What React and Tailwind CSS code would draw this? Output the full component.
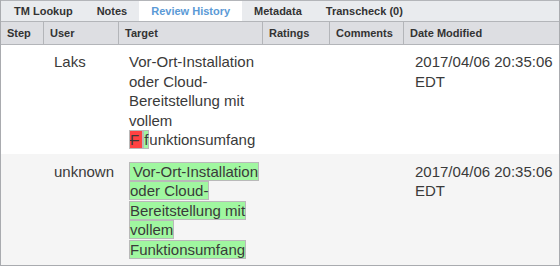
const tabs = ["TM Lookup", "Notes", "Review History", "Metadata", "Transcheck (0)"];
const cols = ["Step", "User", "Target", "Ratings", "Comments", "Date Modified"];

function Added({ children }) {
  return (
    <span className="bg-[#a0f7a0] border border-[#b9b9b9] box-decoration-clone">{children}</span>
  );
}

export default function App() {
  return (
    <div
      className="w-[560px] h-[266px] overflow-hidden bg-white border border-t-0 border-[#a9abaf] text-[#3a3a3a]"
      style={{ fontFamily: '"Liberation Sans", Arial, sans-serif' }}
    >
      {/* tabs */}
      <div className="flex h-[22px] bg-[#e9ebee] border-t border-b border-[#b3b5b9] pl-px">
        {tabs.map((t) => (
          <div
            key={t}
            className={
              t === "Review History"
                ? "px-3 text-[11px] font-bold leading-[20px] bg-white text-[#5b9ad6]"
                : "px-3 text-[11px] font-bold leading-[20px] text-[#333]"
            }
          >
            {t}
          </div>
        ))}
      </div>

      <div className="grid grid-cols-[43px_75px_144px_67px_74px_1fr]">
        {/* header */}
        {cols.map((c, i) => (
          <div
            key={c}
            className={
              "h-[23px] bg-[#dddee2] border-b border-[#b3b5b9] pl-[6px] text-[11px] font-bold leading-[22px] text-[#333] " +
              (i < 5 ? "border-r" : "")
            }
          >
            {c}
          </div>
        ))}

        {/* row 1 */}
        <div className="contents text-[15px] leading-[19.5px]">
          <div className="pt-[7px] pb-[4px]"></div>
          <div className="pt-[7px] pb-[4px] pl-[10px]">Laks</div>
          <div className="pt-[7px] pb-[4px] pl-[10px]">
            Vor-Ort-Installation oder Cloud-Bereitstellung mit vollem{" "}
            <span className="bg-[#ff4242] border border-[#b9b9b9] line-through pr-[3px]">F</span>
            <span className="bg-[#a0f7a0] border border-[#b9b9b9]">f</span>unktionsumfang
          </div>
          <div className="pt-[7px] pb-[4px]"></div>
          <div className="pt-[7px] pb-[4px]"></div>
          <div className="pt-[7px] pb-[4px] pl-[11px]">
            2017/04/06 20:35:06 EDT
          </div>
        </div>

        {/* row 2 */}
        <div className="contents text-[15px] leading-[19.5px]">
          <div className="bg-[#f5f5f5] pt-[8px] h-[112px]"></div>
          <div className="bg-[#f5f5f5] pt-[8px] pl-[10px]">unknown</div>
          <div className="bg-[#f5f5f5] pt-[8px] pl-[10px]">
            <Added>
              <span className="pl-[3px]"></span>Vor-Ort-Installation oder Cloud-Bereitstellung mit vollem Funktionsumfang
            </Added>
          </div>
          <div className="bg-[#f5f5f5] pt-[8px]"></div>
          <div className="bg-[#f5f5f5] pt-[8px]"></div>
          <div className="bg-[#f5f5f5] pt-[8px] pl-[11px]">
            2017/04/06 20:35:06 EDT
          </div>
        </div>
      </div>
    </div>
  );
}
